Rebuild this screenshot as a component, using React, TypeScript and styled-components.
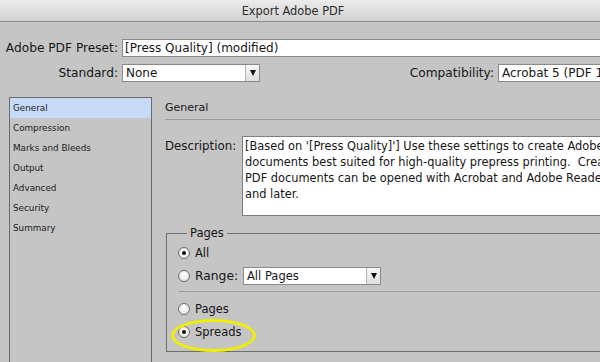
import React from 'react';
import styled, { createGlobalStyle } from 'styled-components';

const GlobalStyle = createGlobalStyle`
  html, body {
    margin: 0;
    padding: 0;
    width: 600px;
    height: 362px;
    overflow: hidden;
    background: #c5c5c5;
  }
  body {
    font-family: "DejaVu Sans", "Liberation Sans", sans-serif;
    color: #161616;
  }
`;

const Window = styled.div`
  width: 600px;
  height: 362px;
  overflow: hidden;
  display: flex;
  flex-direction: column;
  background: #c5c5c5;
`;

const TitleBar = styled.div`
  height: 21px;
  flex: none;
  border-bottom: 1px solid #8c8c8c;
  background: linear-gradient(#ececec, #d0d0d0);
  display: flex;
  align-items: center;
  justify-content: center;
  font-size: 11.4px;
  color: #2c2c2c;
  padding-right: 14px;
`;

const TopForm = styled.div`
  padding-top: 17px;
  display: flex;
  flex-direction: column;
  gap: 7px;
  margin-right: -40px;
`;

const FormRow = styled.div`
  display: flex;
  align-items: center;
  height: 18px;
`;

const Label = styled.span<{ $width?: number }>`
  width: ${(p) => (p.$width ? `${p.$width}px` : 'auto')};
  flex: none;
  text-align: right;
  font-size: 12.2px;
  padding-right: 4px;
`;

const TextBox = styled.div`
  flex: 1;
  height: 16px;
  background: #fff;
  border: 1px solid #8a8a8a;
  font-size: 12px;
  line-height: 16px;
  padding-left: 2px;
  white-space: nowrap;
  overflow: hidden;
`;

const Select = styled.div<{ $width?: number; $size?: number }>`
  width: ${(p) => (p.$width ? `${p.$width}px` : 'auto')};
  flex: none;
  height: 16px;
  display: flex;
  background: #fff;
  border: 1px solid #8a8a8a;
  font-size: ${(p) => p.$size ?? 12}px;
  line-height: 16px;
  white-space: nowrap;
  overflow: hidden;
`;

const SelectValue = styled.span`
  flex: 1;
  padding-left: 3px;
  overflow: hidden;
`;

const SelectArrow = styled.span`
  width: 13px;
  flex: none;
  border-left: 1px solid #b4b4b4;
  background: linear-gradient(#f7f7f7, #dedede);
  display: flex;
  align-items: center;
  justify-content: center;
  &::after {
    content: '';
    border-left: 3.5px solid transparent;
    border-right: 3.5px solid transparent;
    border-top: 6px solid #111;
  }
`;

const Spacer = styled.div`
  flex: 1;
`;

const Main = styled.div`
  margin-top: 15px;
  flex: 1;
  display: flex;
  padding-left: 9px;
  margin-right: -40px;
`;

const NavList = styled.ul`
  width: 141px;
  flex: none;
  margin: 0;
  padding: 0;
  list-style: none;
  border: 1px solid #6a6a6a;
  height: 300px;
`;

const NavItem = styled.li<{ $active?: boolean }>`
  height: 20px;
  line-height: 20px;
  padding-left: 3px;
  font-size: 8.8px;
  background: ${(p) => (p.$active ? '#c7daf6' : 'transparent')};
  color: #1a1a1a;
`;

const Panel = styled.div`
  flex: 1;
  padding-left: 13px;
  display: flex;
  flex-direction: column;
`;

const PanelHeader = styled.div`
  height: 22px;
  line-height: 22px;
  font-size: 11px;
  border-bottom: 1px solid #9a9a9a;
`;

const DescRow = styled.div`
  margin-top: 16px;
  display: flex;
  align-items: flex-start;
`;

const DescLabel = styled.span`
  width: 77px;
  flex: none;
  font-size: 11.8px;
  line-height: 16px;
  padding-top: 2px;
`;

const DescBox = styled.div`
  flex: 1;
  height: 76px;
  background: #fff;
  border: 1px solid #7e7e7e;
  padding: 1px 2px;
  font-size: 11.4px;
  line-height: 16px;
  white-space: pre;
  overflow: hidden;
`;

const Group = styled.fieldset`
  margin: 9px 0 0 1px;
  padding: 0 0 8px 11px;
  border: 1px solid #6e6e6e;
  min-width: 0;
`;

const Legend = styled.legend`
  padding: 0 3px;
  margin-left: 9px;
  font-size: 11.5px;
  line-height: 16px;
`;

const RadioRow = styled.div`
  position: relative;
  height: 23px;
  display: flex;
  align-items: center;
  gap: 5px;
  font-size: 11.5px;
`;

const RangeLabel = styled.span`
  width: 43px;
  font-size: 12.3px;
`;

const Radio = styled.span<{ $checked?: boolean }>`
  width: 10px;
  height: 10px;
  flex: none;
  border-radius: 50%;
  border: 1px solid #6c6c6c;
  background: radial-gradient(circle at 50% 35%, #ffffff, #dcdcdc);
  display: flex;
  align-items: center;
  justify-content: center;
  &::after {
    content: '';
    width: 4px;
    height: 4px;
    border-radius: 50%;
    background: ${(p) => (p.$checked ? '#111' : 'transparent')};
  }
`;

const Divider = styled.div`
  margin: 4px 0 5px 1px;
  border-top: 1px solid #9c9c9c;
`;

const Highlight = styled.span`
  position: absolute;
  left: -7px;
  top: -1px;
  width: 79px;
  height: 27px;
  border: 3px solid #eef000;
  border-radius: 50%;
  pointer-events: none;
`;

const navItems = [
  'General',
  'Compression',
  'Marks and Bleeds',
  'Output',
  'Advanced',
  'Security',
  'Summary',
];

const description = [
  "[Based on '[Press Quality]'] Use these settings to create Adobe PDF",
  'documents best suited for high-quality prepress printing.  Created',
  'PDF documents can be opened with Acrobat and Adobe Reader 5.0',
  'and later.',
].join('\n');

const Dropdown = ({ value, width, size }: { value: string; width: number; size?: number }) => (
  <Select $width={width} $size={size}>
    <SelectValue>{value}</SelectValue>
    <SelectArrow />
  </Select>
);

export default function App() {
  return (
    <Window>
      <GlobalStyle />
      <TitleBar>Export Adobe PDF</TitleBar>
      <TopForm>
        <FormRow>
          <Label $width={118}>Adobe PDF Preset:</Label>
          <TextBox>[Press Quality] (modified)</TextBox>
        </FormRow>
        <FormRow>
          <Label $width={118}>Standard:</Label>
          <Dropdown value="None" width={136} />
          <Spacer />
          <Label>Compatibility:</Label>
          <Dropdown value="Acrobat 5 (PDF 1.4)" width={140} />
        </FormRow>
      </TopForm>
      <Main>
        <NavList>
          {navItems.map((item, i) => (
            <NavItem key={item} $active={i === 0}>
              {item}
            </NavItem>
          ))}
        </NavList>
        <Panel>
          <PanelHeader>General</PanelHeader>
          <DescRow>
            <DescLabel>Description:</DescLabel>
            <DescBox>{description}</DescBox>
          </DescRow>
          <Group>
            <Legend>Pages</Legend>
            <RadioRow>
              <Radio $checked />
              All
            </RadioRow>
            <RadioRow>
              <Radio />
              <RangeLabel>Range:</RangeLabel>
              <Dropdown value="All Pages" width={136} size={11.5} />
            </RadioRow>
            <Divider />
            <RadioRow>
              <Radio />
              Pages
            </RadioRow>
            <RadioRow>
              <Radio $checked />
              Spreads
              <Highlight />
            </RadioRow>
          </Group>
        </Panel>
      </Main>
    </Window>
  );
}
